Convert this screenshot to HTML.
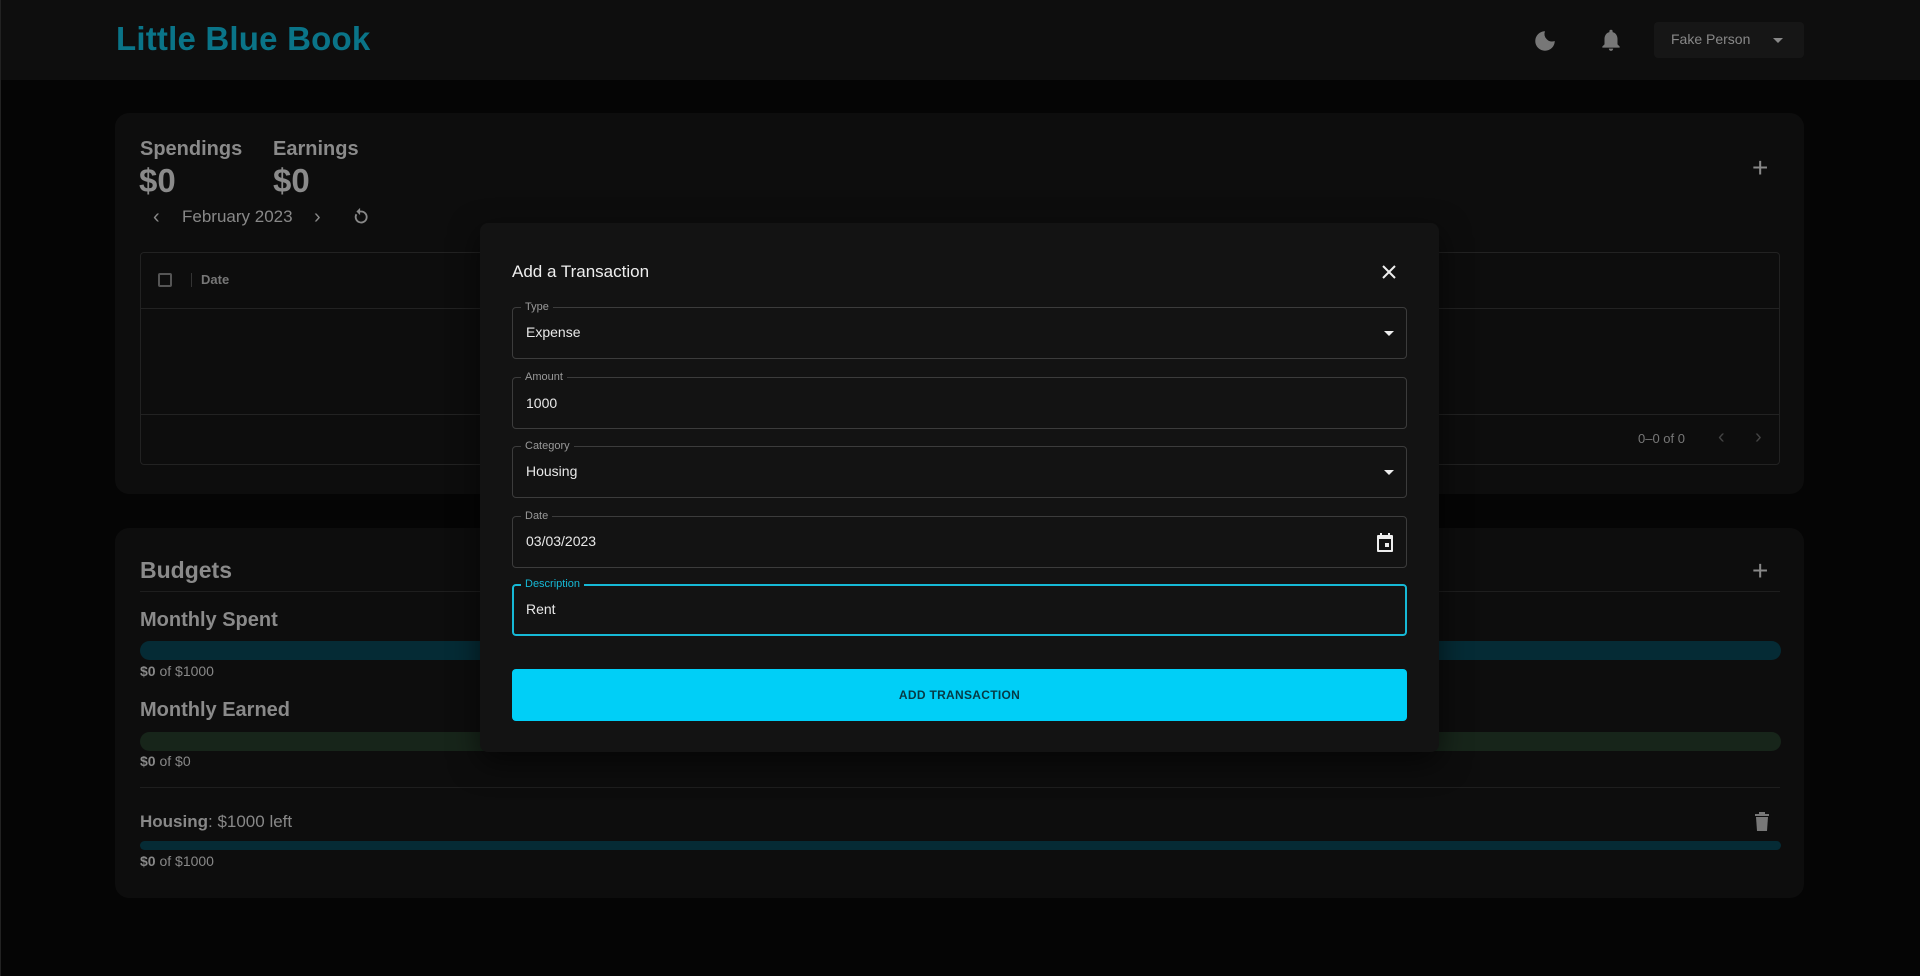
<!DOCTYPE html>
<html><head><meta charset="utf-8"><style>
*{box-sizing:border-box;margin:0;padding:0}
body{width:1920px;height:976px;background:#050505;font-family:"Liberation Sans",sans-serif;position:relative;overflow:hidden;color:#8a8a8a}
.a{position:absolute}
.hdr{left:0;top:0;width:1920px;height:80px;background:#0e0e0e}
.logo{left:116px;top:20px;font-size:33px;font-weight:bold;color:#0a7488;letter-spacing:0.2px}
.card{background:#0d0d0d;border-radius:14px}
.bar{border-radius:10px}
.lbl{font-size:11px;color:#9a9a9a;background:#131313;padding:0 4px;left:8px;top:-7px}
.fld{left:512px;width:895px;height:52px;border:1px solid #3c3c3c;border-radius:4px}
.val{left:13px;top:16px;font-size:14px;color:#e8e8e8}
.caret{right:12px;top:23px;width:0;height:0;border-left:5px solid transparent;border-right:5px solid transparent;border-top:5px solid #eee}
</style></head><body>
<div class="a hdr"></div>
<div class="a" style="left:0;top:0;width:1px;height:976px;background:#222"></div>
<div class="a logo">Little Blue Book</div>
<svg class="a" style="left:1532px;top:28px" width="26" height="26" viewBox="0 0 24 24"><path fill="#777" d="M12 3a9 9 0 1 0 9 9 7 7 0 0 1-9-9z"/></svg>
<svg class="a" style="left:1598px;top:27px" width="26" height="26" viewBox="0 0 24 24"><path fill="#777" d="M12 22a2 2 0 0 0 2-2h-4a2 2 0 0 0 2 2zm6-6V11c0-3-1.6-5.6-4.5-6.3V4a1.5 1.5 0 0 0-3 0v.7C7.6 5.4 6 8 6 11v5l-2 2v1h16v-1z"/></svg>
<div class="a" style="left:1654px;top:22px;width:150px;height:36px;background:#161616;border-radius:4px"></div>
<div class="a" style="left:1671px;top:31px;font-size:14px;color:#888">Fake Person</div>
<div class="a" style="left:1773px;top:38px;border-left:5px solid transparent;border-right:5px solid transparent;border-top:5px solid #888"></div>

<div class="a card" style="left:115px;top:113px;width:1689px;height:381px"></div>
<div class="a" style="left:140px;top:138px;font-size:20px;font-weight:bold;color:#8a8a8a">Spendings</div>
<div class="a" style="left:273px;top:138px;font-size:20px;font-weight:bold;color:#8a8a8a">Earnings</div>
<div class="a" style="left:139px;top:162px;font-size:33px;font-weight:bold;color:#8a8a8a">$0</div>
<div class="a" style="left:273px;top:162px;font-size:33px;font-weight:bold;color:#8a8a8a">$0</div>
<div class="a" style="left:153px;top:206px;font-size:20px;color:#888">‹</div>
<div class="a" style="left:182px;top:207px;font-size:17px;color:#888">February 2023</div>
<div class="a" style="left:314px;top:206px;font-size:20px;color:#888">›</div>
<svg class="a" style="left:350px;top:206px" width="22" height="22" viewBox="0 0 24 24"><path fill="none" stroke="#888" stroke-width="2" d="M7 9a6 6 0 1 0 5-3h-2"/><path fill="#888" d="M11 2v8l-4-4z"/></svg>
<div class="a" style="left:1752px;top:152px;font-size:28px;color:#888">+</div>
<div class="a" style="left:140px;top:252px;width:1640px;height:213px;border:1px solid #222;border-radius:4px"></div>
<div class="a" style="left:140px;top:308px;width:1640px;height:1px;background:#222"></div>
<div class="a" style="left:140px;top:414px;width:1640px;height:1px;background:#222"></div>
<div class="a" style="left:158px;top:273px;width:14px;height:14px;border:2px solid #555;border-radius:2px"></div>
<div class="a" style="left:191px;top:273px;width:1px;height:14px;background:#333"></div>
<div class="a" style="left:201px;top:272px;font-size:13px;font-weight:bold;color:#777">Date</div>
<div class="a" style="left:1638px;top:431px;font-size:13px;color:#777">0–0 of 0</div>
<div class="a" style="left:1718px;top:426px;font-size:20px;color:#444">‹</div>
<div class="a" style="left:1755px;top:426px;font-size:20px;color:#444">›</div>

<div class="a card" style="left:115px;top:528px;width:1689px;height:370px"></div>
<div class="a" style="left:140px;top:557px;font-size:23px;font-weight:bold;color:#8a8a8a">Budgets</div>
<div class="a" style="left:1752px;top:555px;font-size:28px;color:#888">+</div>
<div class="a" style="left:140px;top:591px;width:1640px;height:1px;background:#1e1e1e"></div>
<div class="a" style="left:140px;top:609px;font-size:20px;font-weight:bold;color:#8a8a8a">Monthly Spent</div>
<div class="a bar" style="left:140px;top:641px;width:1641px;height:19px;background:#052b35"></div>
<div class="a" style="left:140px;top:663px;font-size:14px;color:#888"><b>$0</b> of $1000</div>
<div class="a" style="left:140px;top:699px;font-size:20px;font-weight:bold;color:#8a8a8a">Monthly Earned</div>
<div class="a bar" style="left:140px;top:732px;width:1641px;height:19px;background:#17251a"></div>
<div class="a" style="left:140px;top:753px;font-size:14px;color:#888"><b>$0</b> of $0</div>
<div class="a" style="left:140px;top:787px;width:1640px;height:1px;background:#1e1e1e"></div>
<div class="a" style="left:140px;top:812px;font-size:17px;color:#888"><b>Housing</b>: $1000 left</div>
<svg class="a" style="left:1753px;top:812px" width="18" height="20" viewBox="0 0 18 20"><rect x="2" y="2" width="14" height="2" fill="#777"/><rect x="6" y="0" width="6" height="3" fill="#777"/><path fill="#777" d="M3 5h12l-1 14H4z"/></svg>
<div class="a bar" style="left:140px;top:841px;width:1641px;height:9px;background:#052b35"></div>
<div class="a" style="left:140px;top:853px;font-size:14px;color:#888"><b>$0</b> of $1000</div>

<div class="a" style="left:480px;top:223px;width:959px;height:529px;background:#131313;border-radius:8px;box-shadow:0 10px 30px rgba(0,0,0,.6)"></div>
<div class="a" style="left:512px;top:262px;font-size:17px;color:#eee">Add a Transaction</div>
<svg class="a" style="left:1381px;top:264px" width="16" height="16" viewBox="0 0 16 16"><path stroke="#eee" stroke-width="2" d="M2 2l12 12M14 2L2 14"/></svg>

<div class="a fld" style="top:307px"><div class="a lbl">Type</div><div class="a val">Expense</div><div class="a caret"></div></div>
<div class="a fld" style="top:377px"><div class="a lbl">Amount</div><div class="a val" style="top:17px">1000</div></div>
<div class="a fld" style="top:446px"><div class="a lbl">Category</div><div class="a val">Housing</div><div class="a caret"></div></div>
<div class="a fld" style="top:516px"><div class="a lbl">Date</div><div class="a val">03/03/2023</div>
<svg class="a" style="right:12px;top:16px" width="18" height="19" viewBox="0 0 18 19"><path fill="#eee" d="M4 0h2v2h6V0h2v2h2a1 1 0 0 1 1 1v15a1 1 0 0 1-1 1H2a1 1 0 0 1-1-1V3a1 1 0 0 1 1-1h2zM3 6v11h12V6zm6 4h4v4H9z"/></svg></div>
<div class="a fld" style="top:584px;border:2px solid #16b9d6"><div class="a lbl" style="color:#16b9d6;top:-8px;left:7px">Description</div><div class="a val" style="left:12px;top:15px">Rent</div></div>
<div class="a" style="left:512px;top:669px;width:895px;height:52px;background:#00cff7;border-radius:4px;font-size:12px;font-weight:bold;color:#063a44;text-align:center;line-height:52px;letter-spacing:.3px">ADD TRANSACTION</div>
</body></html>
